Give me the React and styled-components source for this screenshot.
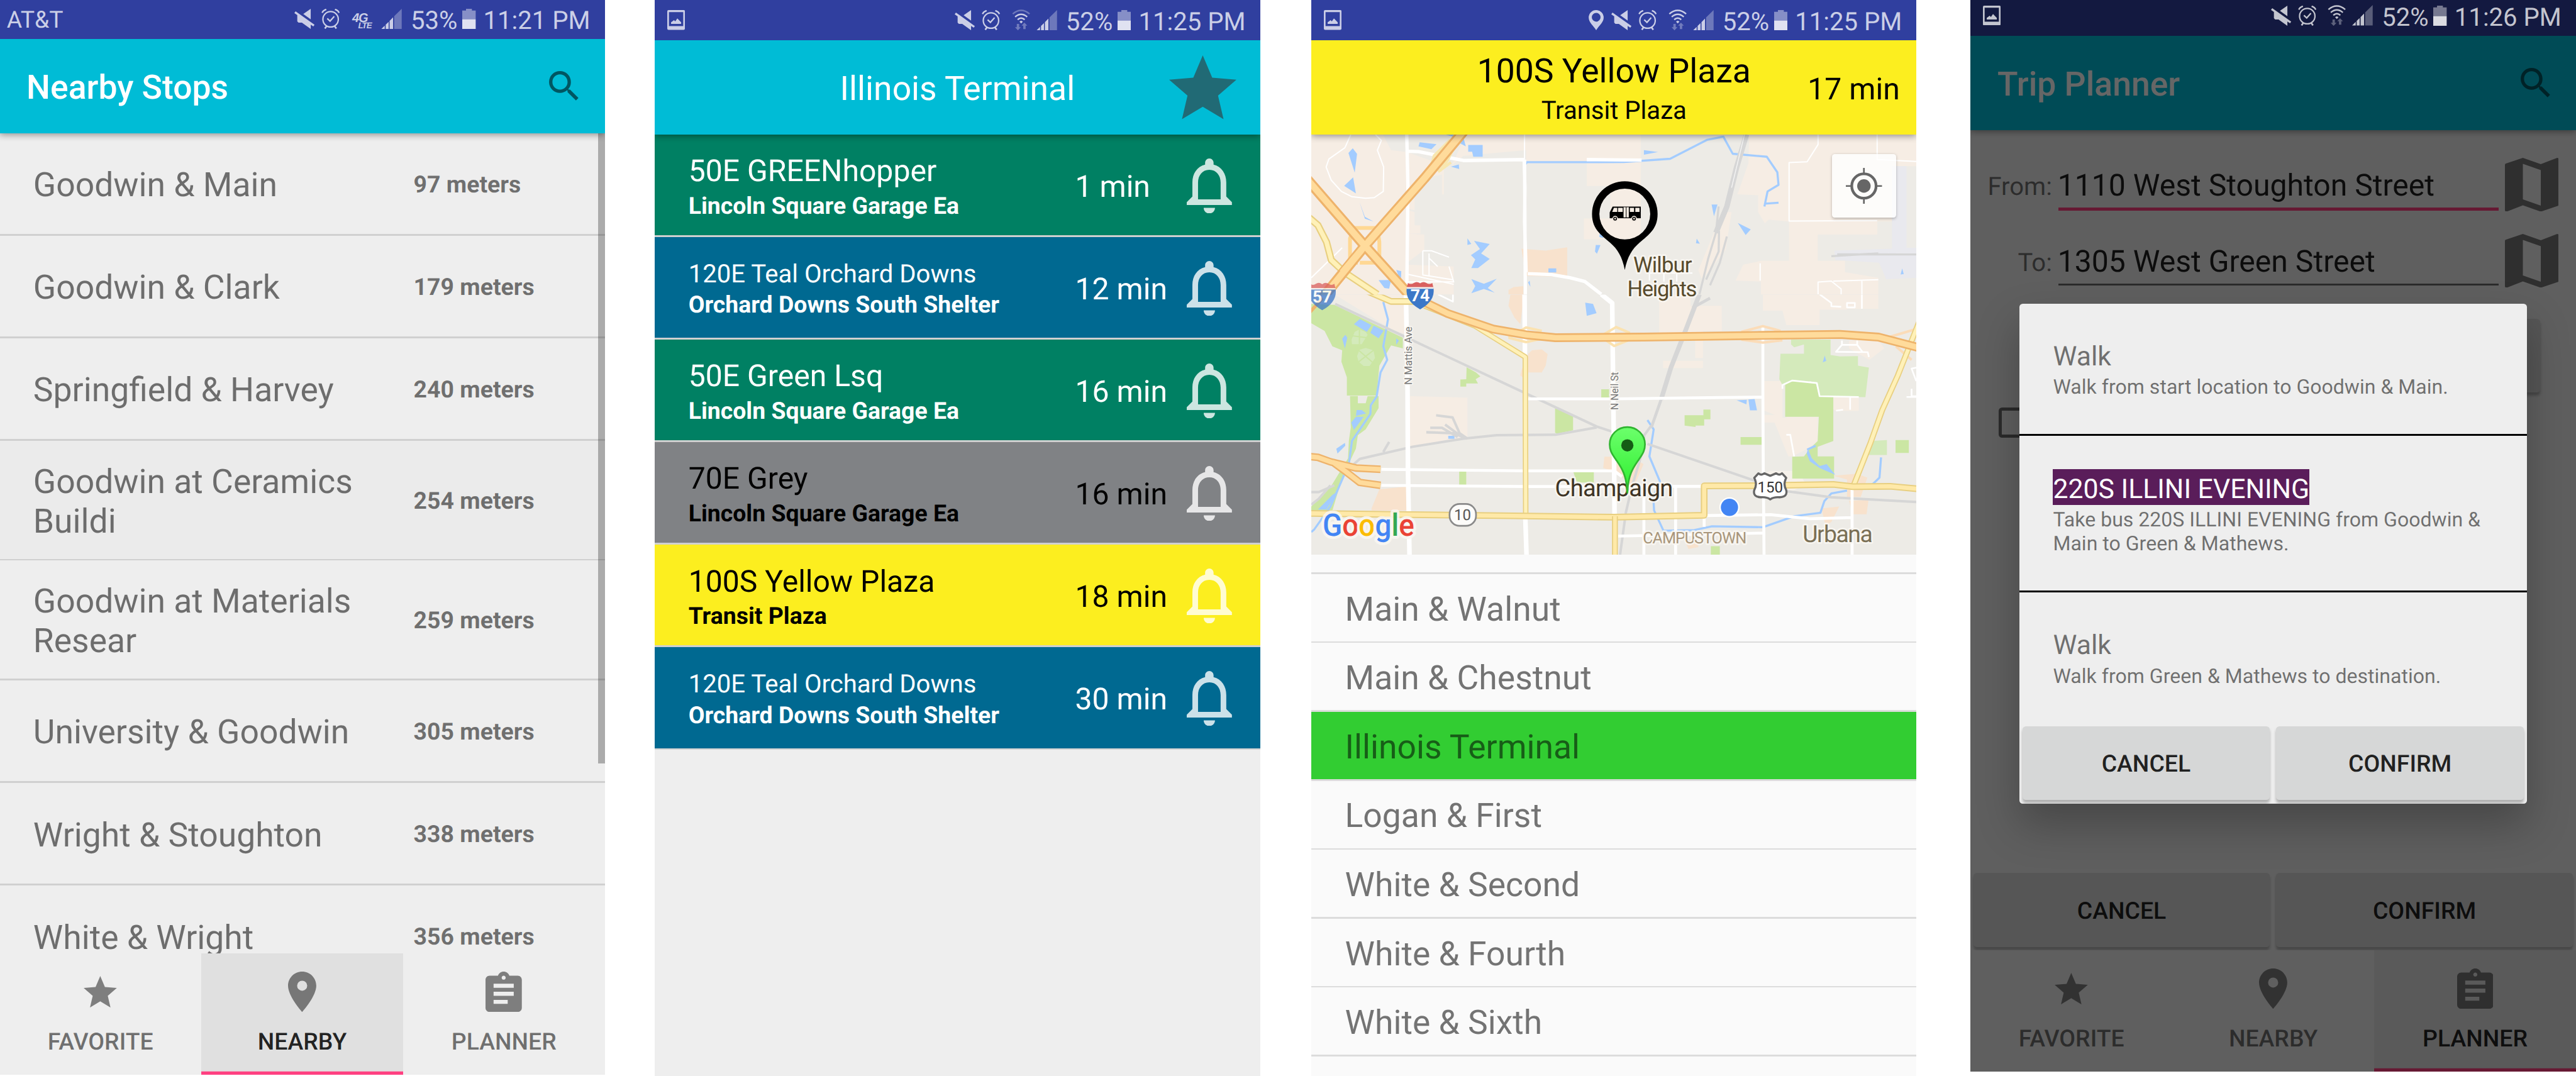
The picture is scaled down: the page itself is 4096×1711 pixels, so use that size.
import React from 'react';
import styled, { createGlobalStyle, css } from 'styled-components';

/* Every size is given in device pixels of a 1440x2560 phone. */
const SCALE = 4096 / 6129;
const u = (n) => `${+(n * SCALE).toFixed(3)}px`;

const color = {
  indigo: '#303f9f',
  indigoDim: '#131940',
  cyan: '#00bcd6',
  pink: '#ff4081',
  surface: '#eeeeee',
  primary: 'rgba(0,0,0,.87)',
  secondary: 'rgba(0,0,0,.54)',
  icon: 'rgba(0,0,0,.47)',
  green: '#008063',
  teal: '#006991',
  grey: '#808285',
  yellow: '#fcee1f',
  illini: '#5a1d5a',
};

const GlobalStyle = createGlobalStyle`
  html, body { margin: 0; background: #fff; overflow: hidden; }
  * { box-sizing: border-box; }
  body { font-family: Roboto, "Liberation Sans", sans-serif; text-rendering: geometricPrecision; }
  svg { display: block; flex: none; }
`;

const Board = styled.main`
  display: flex;
  width: ${u(6129)};
  height: ${u(2560)};
  overflow: hidden;
  background: #fff;
`;

const Screen = styled.section`
  position: relative;
  flex: none;
  display: flex;
  flex-direction: column;
  width: ${(p) => u(p.$w || 1440)};
  height: ${u(2560)};
  margin-left: ${(p) => u(p.$gap)};
  margin-top: ${(p) => u(p.$top || 0)};
  background: ${(p) => p.$bg || color.surface};
  overflow: hidden;
`;

const Text = styled.span`
  display: block;
  font-size: ${(p) => u(p.$size)};
  font-weight: ${(p) => p.$weight || 400};
  line-height: 1.172;
  padding: 0.146em 0 0.01em;
  color: ${(p) => p.$color || 'inherit'};
  text-align: ${(p) => p.$align || 'left'};
  white-space: ${(p) => (p.$wrap ? 'normal' : 'nowrap')};
`;

/* ---------- status bar ---------- */

const StatusBar = styled.header`
  flex: none;
  display: flex;
  align-items: center;
  height: ${u(96)};
  background: ${(p) => (p.$dim ? color.indigoDim : color.indigo)};
  color: rgba(255, 255, 255, 0.75);
  position: relative;
  z-index: ${(p) => (p.$dim ? 5 : 3)};
`;

const StatusLeft = styled.div`
  padding-left: ${(p) => u(p.$pad)};
`;

const StatusRight = styled.div`
  display: flex;
  align-items: center;
  height: 100%;
  margin-left: auto;
`;

const Slot = styled.div`
  flex: none;
  display: flex;
  align-items: center;
  width: ${(p) => u(p.$w)};
`;

const Glyph = styled.svg`
  width: ${(p) => u(p.$w)};
  height: ${(p) => u(p.$h)};
  fill: ${(p) => p.$fill || 'currentColor'};
`;

const PinGlyph = () => (
  <Glyph $w={36} $h={48} viewBox="61 72 106 143">
    <path fillRule="evenodd" d="M114 215C97 184 61 160 61 125a53 53 0 0 1 106 0c0 35-36 59-53 90zM114 92a31 31 0 1 0 0 62 31 31 0 0 0 0-62z" />
  </Glyph>
);

const MuteGlyph = () => (
  <Glyph $w={48} $h={48} viewBox="222 72 144 144">
    <path d="M231 90 366 186 358 198 339 185V216L276 171H252L243 162V117L222 102z" />
    <path d="M339 72V147L286 109z" />
  </Glyph>
);

const AlarmGlyph = () => (
  <Glyph $w={44} $h={48} viewBox="413 72 132 144" $fill="none" stroke="currentColor">
    <circle cx="479" cy="147" r="55" strokeWidth="10" />
    <path strokeWidth="10" d="M455 141 475 160 505 126" />
    <path strokeWidth="11" d="M419 101Q424 84 448 76M539 101Q534 84 510 76" />
    <path strokeWidth="12" d="M449 198 438 213M509 198 520 213" />
  </Glyph>
);

const WifiGlyph = ({ weak }) => (
  <Glyph $w={44} $h={50} viewBox="625 68 132 150">
    <g fill="none" stroke="currentColor" strokeWidth="11">
      <path opacity={weak ? 0.4 : 1} d="M631 100Q691 50 751 100" />
      <path d="M648 121Q691 84 734 121" />
      <path d="M666 141Q691 119 716 141" />
    </g>
    <path d="M691 168 679 156Q691 142 703 156z" />
    <path opacity=".42" d="M660 171H677V195H689L668 217 647 195H660zM706 208H723V184H735L714 162 694 184H706z" />
  </Glyph>
);

const LteLabel = styled.div`
  display: flex;
  flex-direction: column;
  width: ${u(50)};
  margin-top: ${u(13)};
  font: italic 700 ${u(30)} / ${u(22)} 'Liberation Sans', Arial, sans-serif;
  letter-spacing: ${u(-2)};
`;

const LteSub = styled.span`
  padding-left: ${u(14)};
  font-size: ${u(20)};
  line-height: ${u(16)};
  letter-spacing: ${u(-1.5)};
`;

const SignalGlyph = () => (
  <Glyph $w={49} $h={49} viewBox="803 70 148 147">
    <path d="M803 216 829 190V216zM836 216V184L857 163V216zM864 216V156L889 131V216z" />
    <path opacity=".4" d="M897 216V123L951 70V216z" />
  </Glyph>
);

const BatteryGlyph = () => (
  <Glyph $w={32} $h={48} viewBox="0 0 32 48" $fill="#fff">
    <path opacity=".42" d="M9 0H23V4H32V25H0V4H9z" />
    <path opacity=".85" d="M0 25H32V48H0z" />
  </Glyph>
);

const PictureGlyph = () => (
  <Glyph $w={42} $h={47} viewBox="0 0 42 47">
    <path fillRule="evenodd" d="M3 0H39a3 3 0 0 1 3 3V44a3 3 0 0 1-3 3H3a3 3 0 0 1-3-3V3a3 3 0 0 1 3-3zM4 5V38H38V5z" />
    <path d="M9 33V29L16 24 19 27 24 20 33 29V33z" />
  </Glyph>
);

function Status({ carrier, pin, lte, weakWifi, percent, time, dim }) {
  return (
    <StatusBar $dim={dim}>
      <StatusLeft $pad={carrier ? 17 : 30}>
        {carrier ? <Text $size={56}>{carrier}</Text> : <PictureGlyph />}
      </StatusLeft>
      <StatusRight>
        {pin && <Slot $w={54}><PinGlyph /></Slot>}
        <Slot $w={64}><MuteGlyph /></Slot>
        <Slot $w={lte ? 74 : 71}><AlarmGlyph /></Slot>
        {lte ? (
          <Slot $w={69}><LteLabel>4G<LteSub>LTE</LteSub></LteLabel></Slot>
        ) : (
          <Slot $w={59}><WifiGlyph weak={weakWifi} /></Slot>
        )}
        <Slot $w={70}><SignalGlyph /></Slot>
        <Slot $w={123}><Text $size={60}>{percent}</Text></Slot>
        <Slot $w={50}><BatteryGlyph /></Slot>
        <Slot $w={289}><Text $size={60}>{time}</Text></Slot>
      </StatusRight>
    </StatusBar>
  );
}

/* ---------- app bar ---------- */

const AppBar = styled.div`
  flex: none;
  position: relative;
  z-index: 2;
  display: ${(p) => (p.$centered ? 'grid' : 'flex')};
  grid-template-columns: 1fr auto 1fr;
  justify-content: space-between;
  align-items: center;
  height: ${u(224)};
  padding: 0 ${(p) => u(p.$centered ? 40 : 48)} 0 ${(p) => u(p.$centered ? 40 : 64)};
  background: ${(p) => p.$bg || color.cyan};
  color: ${(p) => p.$color || '#fff'};
  box-shadow: 0 ${u(5)} ${u(16)} rgba(0, 0, 0, 0.42);
`;

const BarEnd = styled.div`
  grid-column: 3;
  justify-self: end;
  margin-right: ${(p) => u(p.$inset || 0)};
`;

const BarTitle = styled.div`
  grid-column: 2;
  grid-row: 1;
  margin-top: ${(p) => u(p.$shift || 0)};
`;

const SearchIcon = () => (
  <Glyph $w={96} $h={96} $fill={color.secondary} viewBox="0 0 24 24">
    <path d="M15.5 14h-.79l-.28-.27A6.471 6.471 0 0 0 16 9.500 6.500 6.500 0 1 0 9.500 16c1.610 0 3.090-.59 4.230-1.570l.27.28v.79l5 4.990L20.490 19l-4.990-5zm-6 0C7.010 14 5 11.990 5 9.500S7.010 5 9.500 5 14 7.010 14 9.500 11.990 14 9.500 14z" />
  </Glyph>
);

const STAR = 'M12 17.270 18.180 21l-1.640-7.030L22 9.240l-7.190-.61L12 2 9.190 8.630 2 9.240l5.460 4.730L5.820 21z';

/* ---------- bottom tabs ---------- */

const Tabs = styled.nav`
  flex: none;
  display: grid;
  grid-template-columns: repeat(3, 1fr);
  height: ${u(288)};
  background: ${color.surface};
`;

const Tab = styled.div`
  display: flex;
  flex-direction: column;
  align-items: center;
  padding-top: ${u(43)};
  background: ${(p) => (p.$active ? '#e0e0e0' : 'transparent')};
  box-shadow: ${(p) => (p.$active ? `inset 0 ${u(-8)} 0 ${color.pink}` : 'none')};
  color: ${(p) => (p.$active ? color.primary : color.secondary)};
`;

const TabIcon = styled.div`
  display: flex;
  align-items: center;
  height: ${u(96)};
  margin-bottom: ${u(32)};
`;

const tabs = [
  ['FAVORITE', <Glyph $w={79} $h={75} $fill={color.icon} viewBox="2 2 20 19"><path d={STAR} /></Glyph>],
  ['NEARBY', <Glyph $w={67.2} $h={96} $fill={color.icon} viewBox="5 2 14 20"><path d="M12 2C8.130 2 5 5.130 5 9c0 5.250 7 13 7 13s7-7.750 7-13c0-3.870-3.130-7-7-7zm0 9.500a2.500 2.500 0 0 1 0-5 2.500 2.500 0 0 1 0 5z" /></Glyph>],
  ['PLANNER', <Glyph $w={86.4} $h={96} $fill={color.icon} viewBox="3 1 18 20"><path d="M19 3h-4.180C14.400 1.840 13.300 1 12 1c-1.300 0-2.400.84-2.820 2H5c-1.100 0-2 .9-2 2v14c0 1.100.9 2 2 2h14c1.100 0 2-.9 2-2V5c0-1.100-.9-2-2-2zm-7 0c.55 0 1 .45 1 1s-.45 1-1 1-1-.45-1-1 .45-1 1-1zm2 14H7v-2h7v2zm3-4H7v-2h10v2zm0-4H7V7h10v2z" /></Glyph>],
];

const BottomTabs = ({ active }) => (
  <Tabs>
    {tabs.map(([label, icon]) => (
      <Tab key={label} $active={label === active}>
        <TabIcon>{icon}</TabIcon>
        <Text $size={56} $weight={500}>{label}</Text>
      </Tab>
    ))}
  </Tabs>
);

/* ---------- nearby stops ---------- */

const Body = styled.div`
  position: relative;
  flex: 1;
  min-height: 0;
  overflow: hidden;
`;

const Divider = styled.div`
  flex: none;
  height: ${u(4)};
  background: ${(p) => p.$color || '#d0d0d0'};
`;

const StopRow = styled.div`
  display: grid;
  grid-template-columns: ${u(905)} 1fr;
  align-items: center;
  height: ${(p) => u(p.$tall ? 281 : 240)};
  padding-left: ${u(80)};
  background: ${(p) => (p.$shade ? '#ebebeb' : 'transparent')};
  color: ${color.secondary};
`;

const StopName = styled(Text)`
  max-width: ${u(800)};
`;

const ScrollThumb = styled.div`
  position: absolute;
  top: 0;
  right: 0;
  width: ${u(16)};
  height: ${u(1499)};
  background: rgba(0, 0, 0, 0.28);
`;

const stops = [
  ['Goodwin & Main', '97 meters'],
  ['Goodwin & Clark', '179 meters'],
  ['Springfield & Harvey', '240 meters'],
  ['Goodwin at Ceramics Buildi', '254 meters', true, true],
  ['Goodwin at Materials Resear', '259 meters', true],
  ['University & Goodwin', '305 meters'],
  ['Wright & Stoughton', '338 meters'],
  ['White & Wright', '356 meters'],
];

const NearbyScreen = () => (
  <Screen $gap={-1} $top={-3}>
    <Status carrier="AT&T" lte percent="53%" time="11:21 PM" />
    <AppBar>
      <Text $size={80} $weight={500}>Nearby Stops</Text>
      <SearchIcon />
    </AppBar>
    <Body>
      {stops.map(([name, distance, tall, shade]) => (
        <React.Fragment key={name}>
          <StopRow $tall={tall} $shade={shade}>
            <StopName $size={80} $wrap>{name}</StopName>
            <Text $size={56} $weight={700}>{distance}</Text>
          </StopRow>
          <Divider />
        </React.Fragment>
      ))}
      <ScrollThumb />
    </Body>
    <BottomTabs active="NEARBY" />
  </Screen>
);

/* ---------- departures ---------- */

const DepartureRow = styled.div`
  display: grid;
  grid-template-columns: ${u(920)} ${u(266)} auto;
  justify-content: start;
  align-items: center;
  height: ${u(240)};
  padding-left: ${u(80)};
  background: ${(p) => p.$bg};
  color: ${(p) => (p.$dark ? '#000' : '#fff')};
`;

const BellIcon = () => (
  <Bell $w={107.500} $h={131} $fill="rgba(255,255,255,.8)" viewBox="4 2.500 16 19.500">
    <path d="M12 22c1.100 0 2-.9 2-2h-4c0 1.100.9 2 2 2zm6-6v-5c0-3.070-1.630-5.640-4.500-6.320V4c0-.83-.67-1.500-1.500-1.500s-1.500.67-1.500 1.500v.68C7.640 5.360 6 7.920 6 11v5l-2 2v1h16v-1l-2-2zm-2 1H8v-6c0-2.480 1.510-4.500 4-4.500s4 2.020 4 4.500v6z" />
  </Bell>
);

const Bell = styled(Glyph)`
  margin-top: ${u(4)};
`;

const departures = [
  ['50E GREENhopper', 'Lincoln Square Garage Ea', '1 min', color.green, 72],
  ['120E Teal Orchard Downs', 'Orchard Downs South Shelter', '12 min', color.teal, 60],
  ['50E Green Lsq', 'Lincoln Square Garage Ea', '16 min', color.green, 72],
  ['70E Grey', 'Lincoln Square Garage Ea', '16 min', color.grey, 72, true],
  ['100S Yellow Plaza', 'Transit Plaza', '18 min', color.yellow, 72, true],
  ['120E Teal Orchard Downs', 'Orchard Downs South Shelter', '30 min', color.teal, 60],
];

const DeparturesScreen = () => (
  <Screen $gap={119}>
    <Status weakWifi percent="52%" time="11:25 PM" />
    <AppBar $centered>
      <BarTitle><Text $size={80}>Illinois Terminal</Text></BarTitle>
      <BarEnd $inset={16}>
        <Glyph $w={160} $h={152} $fill="#216a75" viewBox="2 2 20 19"><path d={STAR} /></Glyph>
      </BarEnd>
    </AppBar>
    <Body>
      {departures.map(([route, headsign, wait, bg, size, dark]) => (
        <React.Fragment key={route + wait}>
          <DepartureRow $bg={bg} $dark={dark}>
            <div>
              <Text $size={size}>{route}</Text>
              <Text $size={56} $weight={700}>{headsign}</Text>
            </div>
            <Text $size={72}>{wait}</Text>
            <BellIcon />
          </DepartureRow>
          <Divider />
        </React.Fragment>
      ))}
    </Body>
  </Screen>
);

/* ---------- route map ---------- */

const MapFrame = styled.div`
  position: relative;
  flex: none;
  height: ${u(1000)};
  overflow: hidden;
`;

const MapSvg = styled.svg`
  width: ${u(1440)};
  height: ${u(1000)};
  font-family: Roboto, 'Liberation Sans', sans-serif;
`;

const lineStyle = css`
  fill: none;
  stroke-linejoin: round;
  vector-effect: non-scaling-stroke;
`;

const Line = styled.path`
  ${lineStyle}
  stroke: ${(p) => p.$c};
  stroke-width: ${(p) => u(p.$w)};
`;

const Cased = ({ d, edge, core, w }) => (
  <>
    <Line d={d} $c={edge} $w={w} />
    <Line d={d} $c={core} $w={w * 0.62} />
  </>
);

const Label = styled.text`
  font-size: ${(p) => p.$size}px;
  font-weight: ${(p) => p.$weight || 400};
  fill: ${(p) => p.$c};
  stroke: rgba(250, 247, 242, 0.85);
  stroke-width: ${(p) => (p.$halo === undefined ? 8 : p.$halo)};
  stroke-linejoin: round;
  paint-order: stroke;
`;

const WATER = '#a3ccff';
const PARK = '#cbe6a3';
const LAWN = '#d4eabb';
const TOWN = '#f6ede4';
const SHOP = '#f8e2cd';
const FWY_EDGE = '#eeb36b';
const FWY = '#ffdb9b';
const HWY_EDGE = '#e8cf80';
const HWY = '#fff1b8';
const RAIL = '#d6d6d6';

const NorthLand = () => (
  <>
    <g fill={TOWN}>
      <path d="M11 700H190L215 800 255 810 350 880 350 1035H345V930L275 960V1120L230 1100 275 1130V1200H290V1245H255L300 1250V1330L250 1410 375 1420V1568H11z" />
      <path d="M410 700H853V850L775 990V1165L708 1275V1165H775V990H715V865H560V800L400 830 370 880z" />
      <path d="M715 865H853V1275H708V1165H775V990H715z" />
      <path d="M1130 700H1557V885H1495V1180H1457V1250H1232V1390L1232 1180 1180 1170 1170 1190 1153 1130V1040L1100 1035 1128 870z" />
      <path d="M1232 1180H1457V1250H1305V1390H1375V1450L1460 1480V1568H1160V1500L1095 1495 1115 1410 1160 1390H1232z" />
      <path d="M1062 1130 1085 1130 1070 1330 1010 1490 1000 1440z" />
    </g>
    <path fill={SHOP} d="M548 1325 610 1335 665 1318V1475L560 1470zM528 1530 553 1525V1568H515V1545z" />
    <path fill="#e9e9ee" d="M1495 885H1532V1320H1557V1480L1480 1488 1462 1400 1350 1385 1348 1335 1495 1325z" />
    <g fill={WATER}>
      <path d="M117 790 128 820 122 920 106 815zM118 945 125 1030 95 990zM134 1075 148 1155 170 1180 148 1165zM288 758 331 768 318 795 285 780zM355 717H375L372 728zM400 735 406 780 392 765zM412 772H449V835H425L422 808H412zM368 888 388 876 389 900zM861 800 897 810 861 824zM1034 1090H1049L1040 1153zM1101 1188 1134 1222 1121 1252zM996 1272 1004 1298 994 1296zM738 1305 750 1306 741 1352 736 1340zM748 1245H757V1268L747 1262zM410 1270 420 1300 410 1305zM427 1283 467 1300 445 1350 467 1380 437 1428H420L430 1382 419 1360 442 1327zM420 1487 452 1512 485 1485 462 1535 480 1560 452 1540 420 1562 430 1525zM617 1430H637V1452H617zM183 1493 215 1492 210 1538 198 1535zM228 1438 241 1445 240 1500zM1521 1430 1525 1460 1517 1463zM569 1495 571 1528 565 1505z" />
    </g>
    <Line $c={WATER} $w={5} d="M558 875 562 864H715L810 863 928 846 1022 745 1064 728 1088 819 1175 835 1202 918 1205 985 1177 1020 1169 1100M1170 1085 1205 1080" />
    <g>
      <Line $c="#fff" $w={3} d="M112 717 97 787 56 847 49 890 62 960 88 1020 115 1048 150 1056 172 1053 195 1020 196 890 180 800 190 748 175 717M556 717V850M1306 717V770L1278 862 1232 866V1178L1457 1175M1457 717V850L1557 860M1158 1403V1495M296 1336H318L363 1370M296 1336V1465L372 1490M312 1350V1470M312 1375 334 1420M363 1420 375 1502H255M255 1460 375 1515M11 1480 90 1320M870 1455H985M875 1455V1495M912 1455V1500M945 1455V1500M1306 1568V1503L1340 1498 1365 1540V1568M1345 1498 1460 1490M1418 1492V1568" />
      <Line $c="#fff" $w={8} d="M255 717 258 1000 255 1568M255 805 285 808 400 855 555 850M555 850 557 1000 556 1180 560 1450M556 850 558 1568M715 850 855 853M564 1458 625 1463 672 1480 710 1500 752 1568" />
    </g>
    <Line $c={RAIL} $w={13} d="M1123 717 1098 890 1073 1100 1045 1240" />
    <Line $c="#f5f5f5" $w={2} d="M1118 717 1085 1000" />
    <Line $c={RAIL} $w={5} d="M1052 1100 1045 1240 1025 1380 1003 1568M1053 1230 1052 1340 1020 1490M1073 1260 1055 1400 1030 1520M1355 1355 1557 1356M1340 1365 1460 1350" />
    <Cased edge={HWY_EDGE} core={HWY} w={17} d="M0 1150 28 1200 50 1290 62 1385 95 1450 180 1568" />
    <Line $c="#f8e7b0" $w={7} d="M366 745 325 830 318 880M372 800 360 850 340 910M368 865 335 915" />
    <Line $c="#ffd893" $w={9} d="M115 1215H185M120 1215 110 1270 110 1400H130M180 1215 185 1290 185 1400H135M125 1230 175 1400M175 1230 125 1390" />
    <Cased edge={FWY_EDGE} core={FWY} w={25} d="M400 700 300 950 148 1310 35 1600" />
    <Cased edge={FWY_EDGE} core={FWY} w={25} d="M-10 930 148 1310 260 1568" />
    <Line $c={FWY} $w={15.500} d="M300 950 148 1310 90 1452" />
  </>
);

const SouthLand = () => (
  <>
    <g fill={TOWN}>
      <path d="M70 0H255V210L215 180zM262 528 410 535V745L262 790zM900 0H980V60H1060V190H1012V330H992V230L900 200zM910 345H1012V382H910zM1085 0H1460V75H1380V80H1310V160H1225L1215 85H1165V0zM1165 450H1215V640H1225L1245 840H1230L1195 665H1168V625H1195L1165 600zM1310 530H1410V605H1350zM1225 635H1305V760L1280 800 1240 840zM1385 240 1460 235 1475 280 1437 340 1385 280z" />
      <path d="M1165 1020 1165 930 1185 915 1255 915 1275 985 1240 1020z" fill="#f6f1ea" />
    </g>
    <g fill={SHOP}>
      <path d="M520 0 555 0 545 155 530 120 515 60zM575 290 600 285 615 310 610 370 600 405H565V310zM550 380 557 440 545 420zM165 1110 185 1010 262 995V1120H165zM760 842 830 840 860 880 835 1000 790 920 757 900zM1345 940 1405 930 1432 950 1415 1050H1380V960zM1385 1070 1435 1065 1430 1140H1395zM1315 1110 1360 1100 1340 1180 1325 1200zM965 1275 1000 1270V1310L975 1320z" />
    </g>
    <g fill={PARK}>
      <path d="M11 50 70 55 245 225V280L215 265 185 370 178 525H102V430L88 350 90 290 65 270 45 190 11 150zM110 527H130V565H150L155 528H183V590L150 700 130 730 125 800 90 950 65 1120H11V1100L60 1000 105 850 107 760 112 690zM408 378 432 405 443 425 431 440 437 462H407V478H392V442L407 440zM752 492H772V535H752zM634 590 680 630V705L640 722 634 718zM965 627H1013V597H1031V648H1015V680H993V688L965 680zM1108 740H1162V780H1108zM1504 755H1538V822H1504zM389 918H407V988H389zM681 922H733V975H690zM1032 1305H1055V1350H1032zM1222 460 1240 445 1300 460 1310 530H1345V760L1305 790V840H1347V955H1240V842L1270 840 1285 800 1305 760 1308 635H1222z" />
      <g fill={LAWN}>
        <path d="M1237 235H1338V315L1362 322 1408 320V370L1436 380 1427 533 1310 530 1300 460 1270 440V260L1245 275 1237 260zM1210 308H1270L1285 455 1240 445 1215 470 1207 440zM1440 760 1482 755V833H1435V790zM134 182 150 195 155 210 140 258H115L114 235 122 195zM150 278 170 290 174 330 160 372H145L132 350 128 320 134 288z" />
      </g>
    </g>
    <Line $c={PARK} $w={3} d="M134 182V258M116 215 153 225M132 290 172 360M170 290 132 350" />
    <g fill={WATER}>
      <path d="M135 128 165 160 153 195 120 155zM170 162 196 188 183 228 162 200zM98 210 103 225 97 280 90 230zM228 228 235 240 228 262zM711 43 731 50 740 98 715 112zM1098 549 1124 547 1123 570zM1128 545 1144 543 1150 601H1132zM361 733H377V749H361zM127 600 140 600 151 618 125 630zM125 635 145 635 120 703 113 665zM97 770 98 785 78 825 75 800zM1323 318 1327 345 1318 353zM1280 800 1290 850 1310 890 1328 880 1350 935 1310 900 1285 865 1277 825zM65 1040 80 1020 50 1115 28 1115z" />
    </g>
    <Line $c={WATER} $w={5} d="M195 40 207 130 195 270 205 340 188 405 178 530 163 575 162 620 115 760 107 880 60 1100 18 1220 11 1232M870 652 886 700 875 840 902 970 885 1050 887 1120 911 1225 990 1222 1035 1202 1165 1207 1245 1150 1312 1132 1322 1072 1340 1032 1380 1017M1467 845 1463 950 1445 985M1300 785 1278 805" />
    <Line $c={RAIL} $w={6} d="M72 50 245 215 550 505 740 685 780 712M740 690 635 728 485 730 400 748 270 790 135 853 120 880M330 627 372 638 390 720 410 748M353 675 400 745M315 692H345L385 740M305 715 375 720 405 745M210 765 195 817M870 775 1150 970 1225 1020 1340 1052 1557 1076M880 680 862 730 855 830 830 1000 815 1130 800 1350M11 1025H30L70 990M60 990 30 1060 11 1090" />
    <Line $c={RAIL} $w={11} d="M1003 0 965 200 930 380 905 545" />
    <Line $c={RAIL} $w={7} d="M905 545 880 690M1030 20 985 70" />
    <g>
      <Line $c="#fff" $w={4} d="M335 0 373 38V0M1310 0 1340 45V62L1365 65M1380 45H1400V68H1380zM1418 0V75M1367 240V262L1352 298 1433 300 1436 325M1367 262H1406L1420 300M1406 240V262M1215 490V470L1240 447 1303 460 1310 528 1410 532M1388 532V598M1352 603 1370 598M1225 728H1235L1245 840M1557 380 1545 385 1557 450M1545 490V528H1557M1532 532H1557" />
      <Line $c="#fff" $w={11} d="M253 0 257 500 258 900 262 1350M556 0 557 320M752 0 780 45 782 400 785 900 786 1150M558 1160 561 1350" />
      <Line $c="#fff" $w={7} d="M1165 170V500L1166 900 1168 1350M565 542 785 542 1060 535 1165 533M190 907 560 915H785L805 945M190 990 560 996 1010 995M861 1050V1350M942 995V1350M1015 1145V1205M1015 1147 1185 1142 1285 1163 1393 1157M1393 1010V1350M795 1253 1165 1237" />
    </g>
    <Line $c="#fbe2b0" $w={6} d="M515 225 560 172 600 190M515 225 560 248 600 230M755 212 790 170 825 200M755 225 785 268 825 235" />
    <Line $c="#fbdcb8" $w={6} d="M1110 195 1165 165 1210 190M1110 235 1165 250 1215 238M1490 220 1557 180M1505 270 1545 340" />
    <Cased edge={HWY_EDGE} core={HWY} w={14} d="M1565 140 1510 420 1470 600 1440 770 1395 1000" />
    <Cased edge={HWY_EDGE} core={HWY} w={13} d="M300 60 430 165 558 325V500L559 1145" />
    <Cased edge={HWY_EDGE} core={HWY} w={16} d="M150 -20 215 37H285" />
    <Cased edge={HWY_EDGE} core="#ffe9a8" w={16} d="M0 1135 260 1142 530 1148 785 1155 1015 1145V993L1150 992 1345 985 1395 997 1490 995 1570 1010" />
    <Cased edge={HWY_EDGE} core="#ffe9a8" w={14} d="M787 1150V1360" />
    <Cased edge={FWY_EDGE} core={FWY} w={21} d="M300 40 360 100 475 180 560 210 635 225 860 222 1165 213 1362 208 1460 222 1570 280" />
    <Cased edge={FWY_EDGE} core={FWY} w={18} d="M0 840 28 845 60 868 125 900 188 907M65 868 100 920 135 975 188 990" />
    <Line $c={FWY_EDGE} $w={8} d="M0 110 40 20" />
  </>
);

const Interstate = ({ x, y, n, faded }) => (
  <g transform={`translate(${x} ${y})`} opacity={faded ? 0.75 : 1}>
    <path d="M3 3Q10 8 17 3 24-2 32 4 40-2 47 3 54 8 61 3L64 16H0z" fill="#d9605f" />
    <path d="M0 16H64Q68 46 32 66-4 46 0 16z" fill="#3c78c8" />
    <path d="M0 13H64V17H0z" fill="#f3efec" />
    <Label $size={40} $weight={700} $c="#fff" $halo={0} textAnchor="middle" x="32" y="47">{n}</Label>
  </g>
);

const LocateButton = styled.div`
  position: absolute;
  top: ${u(46)};
  left: ${u(1239)};
  display: flex;
  align-items: center;
  justify-content: center;
  width: ${u(153)};
  height: ${u(152)};
  border-radius: ${u(7)};
  background: rgba(255, 255, 255, 0.8);
  box-shadow: 0 ${u(2)} ${u(7)} rgba(0, 0, 0, 0.25);
`;

const google = [['G', '#4285f4'], ['o', '#ea4335'], ['o', '#fbbc05'], ['g', '#4285f4'], ['l', '#34a853'], ['e', '#ea4335']];

const RouteMap = () => (
  <MapFrame>
    <MapSvg viewBox="0 0 1440 1000">
      <defs>
        <linearGradient id="stopPin" x1="0" y1="0" x2="0" y2="1">
          <stop offset="0" stopColor="#6cff6c" />
          <stop offset="1" stopColor="#2dee2d" />
        </linearGradient>
        <clipPath id="north"><path d="M0 0H1440V382H0z" /></clipPath>
        <clipPath id="south"><path d="M0 381H1440V1000H0z" /></clipPath>
      </defs>
      <path fill="#edebe6" d="M0 0H1440V1000H0z" />
      <g clipPath="url(#south)">
        <g transform="matrix(.9311 0 0 .4592 -10.240 380)"><SouthLand /></g>
      </g>
      <g clipPath="url(#north)">
        <g transform="matrix(.9311 0 0 .4464 -10.240 -320)"><NorthLand /></g>
      </g>
      <Interstate x={-6} y={352} n="57" faded />
      <Interstate x={227} y={350} n="74" />
      <Label $size={25} $halo={6} $c="#777" transform="translate(239 595) rotate(-90)" textLength="138" lengthAdjust="spacingAndGlyphs">N Mattis Ave</Label>
      <Label $size={25} $halo={6} $c="#777" transform="translate(730 655) rotate(-90)" textLength="90" lengthAdjust="spacingAndGlyphs">N Neil St</Label>
      <Label $size={52} $c="#574a2c" x="766" y="327" textLength="140">Wilbur</Label>
      <Label $size={52} $c="#574a2c" x="752" y="385" textLength="166">Heights</Label>
      <Label $size={57} $c="#3e3425" x="580" y="860" textLength="281">Champaign</Label>
      <Label $size={38} $c="#a8957a" x="789" y="973" textLength="247">CAMPUSTOWN</Label>
      <Label $size={56} $c="#7a6f55" x="1169" y="970" textLength="167">Urbana</Label>
      <rect x="329" y="879" width="63" height="52" rx="24" fill="#fdfcfa" stroke="#8a8a8a" strokeWidth="4" />
      <Label $size={36} $c="#555" $halo={0} x="360" y="918" textAnchor="middle">10</Label>
      <path fill="#fff" stroke="#666" strokeWidth="5" strokeLinejoin="round" d="M1064 806Q1070 812 1078 806L1092 812 1106 806Q1114 812 1120 806L1130 817Q1122 832 1130 846 1134 862 1114 863 1100 862 1092 868 1084 862 1070 863 1050 862 1054 846 1062 832 1054 817z" />
      <Label $size={36} $c="#333" $halo={0} x="1092" y="851" textAnchor="middle">150</Label>
      <circle cx="995" cy="887" r="24" fill="#fff" />
      <circle cx="995" cy="887" r="20.500" fill="#4285f4" />
      <Label $size={74} $weight={500} $c="#000" $halo={14} x="27" y="954" textLength="218" lengthAdjust="spacingAndGlyphs">
        {google.map(([ch, fill], i) => <tspan key={i} fill={fill}>{ch}</tspan>)}
      </Label>
      <path fill="url(#stopPin)" stroke="#30b530" strokeWidth="4" strokeLinejoin="round" d="M752 852C750 806 736 790 724 772 714 758 710 750 710 737A42 41 0 0 1 794 737C794 750 790 758 780 772 768 790 754 806 752 852z" />
      <circle cx="752" cy="739.500" r="14.500" fill="#155c15" />
      <path fillRule="evenodd" d="M746 322C740 290 728 272 712 258 688 238 668 224 668 189A78 78 0 0 1 824 189C824 224 804 238 780 258 764 272 752 290 746 322zM746 128.500A60.500 60.500 0 1 0 746 249.500 60.500 60.500 0 0 0 746 128.500z" />
      <g>
        <path d="M717 171.500H784V199H710V185z" />
        <path fill={TOWN} d="M720 174.500H728V184H716zM730 174.500H741V184H730zM743 173H748.500V197H743zM750 173H755.500V197H750zM758 174.500H768V184H758zM771 174.500H781V184H771z" />
        <circle cx="723" cy="200" r="5.500" stroke={TOWN} strokeWidth="2" />
        <circle cx="768" cy="200" r="5.500" stroke={TOWN} strokeWidth="2" />
        <circle cx="723" cy="200" r="2" fill={TOWN} />
        <circle cx="768" cy="200" r="2" fill={TOWN} />
      </g>
    </MapSvg>
    <LocateButton>
      <Glyph $w={86} $h={86} $fill="none" stroke="#666" viewBox="-43 -43 86 86">
        <circle r="29" strokeWidth="6.500" />
        <circle r="16" fill="#666" stroke="none" />
        <path strokeWidth="4" d="M0-43V-31M0 31V43M-43 0H-31M31 0H43" />
      </Glyph>
    </LocateButton>
  </MapFrame>
);

const RouteStops = styled.div`
  padding-top: ${u(42)};
`;

const RouteStop = styled.div`
  display: flex;
  align-items: center;
  height: ${u(160)};
  padding-left: ${u(80)};
  background: ${(p) => (p.$current ? '#32cd32' : 'transparent')};
  color: ${color.secondary};
`;

const routeStops = ['Main & Walnut', 'Main & Chestnut', 'Illinois Terminal', 'Logan & First', 'White & Second', 'White & Fourth', 'White & Sixth'];

const RouteScreen = () => (
  <Screen $gap={122} $bg="#fafafa">
    <Status pin percent="52%" time="11:25 PM" />
    <AppBar $centered $bg={color.yellow} $color="#000">
      <BarTitle $shift={-5}>
        <Text $size={80} $align="center">100S Yellow Plaza</Text>
        <Text $size={60} $align="center">Transit Plaza</Text>
      </BarTitle>
      <BarEnd><Text $size={72}>17 min</Text></BarEnd>
    </AppBar>
    <RouteMap />
    <RouteStops>
      <Divider $color="#dcdcdc" />
      {routeStops.map((name) => (
        <React.Fragment key={name}>
          <RouteStop $current={name === 'Illinois Terminal'}><Text $size={80}>{name}</Text></RouteStop>
          <Divider $color="#dcdcdc" />
        </React.Fragment>
      ))}
    </RouteStops>
  </Screen>
);

/* ---------- trip planner ---------- */

const Form = styled.div`
  display: flex;
  flex-direction: column;
  gap: ${u(53)};
  padding-top: ${u(66)};
`;

const FormRow = styled.div`
  display: grid;
  grid-template-columns: ${u(194)} ${u(1047)} auto;
  column-gap: ${u(15)};
  justify-content: start;
  height: ${u(128)};
`;

const FieldLabel = styled(Text)`
  margin-top: ${u(25)};
  color: ${color.secondary};
`;

const Field = styled.div`
  display: flex;
  flex-direction: column;
`;

const FieldText = styled.div`
  height: ${u(119)};
  padding-top: ${u(14.5)};
  margin-left: ${u(-2)};
  color: ${color.primary};
`;

const Underline = styled.div`
  height: ${(p) => u(p.$focus ? 8 : 4)};
  background: ${(p) => (p.$focus ? color.pink : color.secondary)};
`;

const MapIcon = () => (
  <Glyph $w={128} $h={128} $fill="rgba(0,0,0,.5)" viewBox="3 3 18 18">
    <path d="M20.500 3l-.16.03L15 5.100 9 3 3.360 4.900c-.21.07-.36.25-.36.48V20.500c0 .28.22.5.5.5l.16-.03L9 18.900l6 2.100 5.640-1.900c.21-.07.36-.25.36-.48V3.500c0-.28-.22-.5-.5-.5zM15 19l-6-2.110V5l6 2.110V19z" />
  </Glyph>
);

const buttonFace = css`
  height: ${u(176)};
  border-radius: ${u(8)};
  background: #d6d7d7;
  box-shadow: 0 ${u(6)} ${u(7)} rgba(0, 0, 0, 0.26);
`;

const Button = styled.div`
  ${buttonFace}
  flex: 1;
  display: flex;
  align-items: center;
  justify-content: center;
  color: ${color.primary};
`;

const TimeButton = styled.div`
  ${buttonFace}
  flex: none;
  margin: ${u(74)} ${u(86)} 0 ${u(130)};
`;

const Checkbox = styled.div`
  width: ${u(72)};
  height: ${u(72)};
  margin: ${u(36)} 0 0 ${u(67)};
  border: ${u(8.500)} solid rgba(0, 0, 0, 0.56);
  border-radius: ${u(8)};
`;

const PlannerBody = styled(Body)`
  display: flex;
  flex-direction: column;
`;

const ButtonBar = styled.div`
  display: flex;
  gap: ${u(15.500)};
  margin-top: auto;
  padding: ${u(8)} ${u(8)} ${u(8)} ${u(7)};
`;

const Scrim = styled.div`
  position: absolute;
  inset: 0;
  z-index: 4;
  display: flex;
  align-items: center;
  justify-content: center;
  padding-top: ${u(96)};
  background: rgba(0, 0, 0, 0.6);
`;

const Dialog = styled.div`
  width: ${u(1208)};
  height: ${u(1190)};
  border-radius: ${u(8)};
  background: ${color.surface};
  color: ${color.secondary};
  overflow: hidden;
  display: flex;
  flex-direction: column;
`;

const DialogShadow = styled.div`
  border-radius: ${u(8)};
  box-shadow: 0 ${u(50)} ${u(100)} rgba(0, 0, 0, 0.25);
`;

const Step = styled.div`
  flex: none;
  height: ${(p) => u(p.$h)};
  padding: ${u(80)} ${u(80)} 0;
`;

const StepTitle = styled(Text)`
  width: fit-content;
  background: ${(p) => p.$bg || 'transparent'};
  color: ${(p) => (p.$bg ? '#fff' : 'inherit')};
`;

const Actions = () => (
  <ButtonBar>
    {['CANCEL', 'CONFIRM'].map((label) => (
      <Button key={label}><Text $size={56} $weight={500}>{label}</Text></Button>
    ))}
  </ButtonBar>
);

const PlannerScreen = () => (
  <Screen $gap={128.5} $top={-11} $w={1440.5}>
    <Status dim percent="52%" time="11:26 PM" />
    <AppBar>
      <Text $size={80} $weight={500}>Trip Planner</Text>
      <SearchIcon />
    </AppBar>
    <PlannerBody>
      <Form>
        {[['From:', '1110 West Stoughton Street'], ['To:', '1305 West Green Street']].map(([label, value], i) => (
          <FormRow key={label}>
            <FieldLabel $size={60} $align="right">{label}</FieldLabel>
            <Field>
              <FieldText><Text $size={72}>{value}</Text></FieldText>
              <Underline $focus={i === 0} />
            </Field>
            <MapIcon />
          </FormRow>
        ))}
      </Form>
      <TimeButton />
      <Checkbox />
      <Actions />
    </PlannerBody>
    <BottomTabs active="PLANNER" />
    <Scrim>
      <DialogShadow>
        <Dialog>
          <Step $h={311}>
            <StepTitle $size={64}>Walk</StepTitle>
            <Text $size={48} $wrap>Walk from start location to Goodwin & Main.</Text>
          </Step>
          <Divider $color="#000" />
          <Step $h={368}>
            <StepTitle $size={64} $bg={color.illini}>220S ILLINI EVENING</StepTitle>
            <Text $size={48} $wrap>Take bus 220S ILLINI EVENING from Goodwin & Main to Green & Mathews.</Text>
          </Step>
          <Divider $color="#000" />
          <Step $h={311}>
            <StepTitle $size={64}>Walk</StepTitle>
            <Text $size={48} $wrap>Walk from Green & Mathews to destination.</Text>
          </Step>
          <Actions />
        </Dialog>
      </DialogShadow>
    </Scrim>
  </Screen>
);

export default function App() {
  return (
    <>
      <GlobalStyle />
      <Board>
        <NearbyScreen />
        <DeparturesScreen />
        <RouteScreen />
        <PlannerScreen />
      </Board>
    </>
  );
}
